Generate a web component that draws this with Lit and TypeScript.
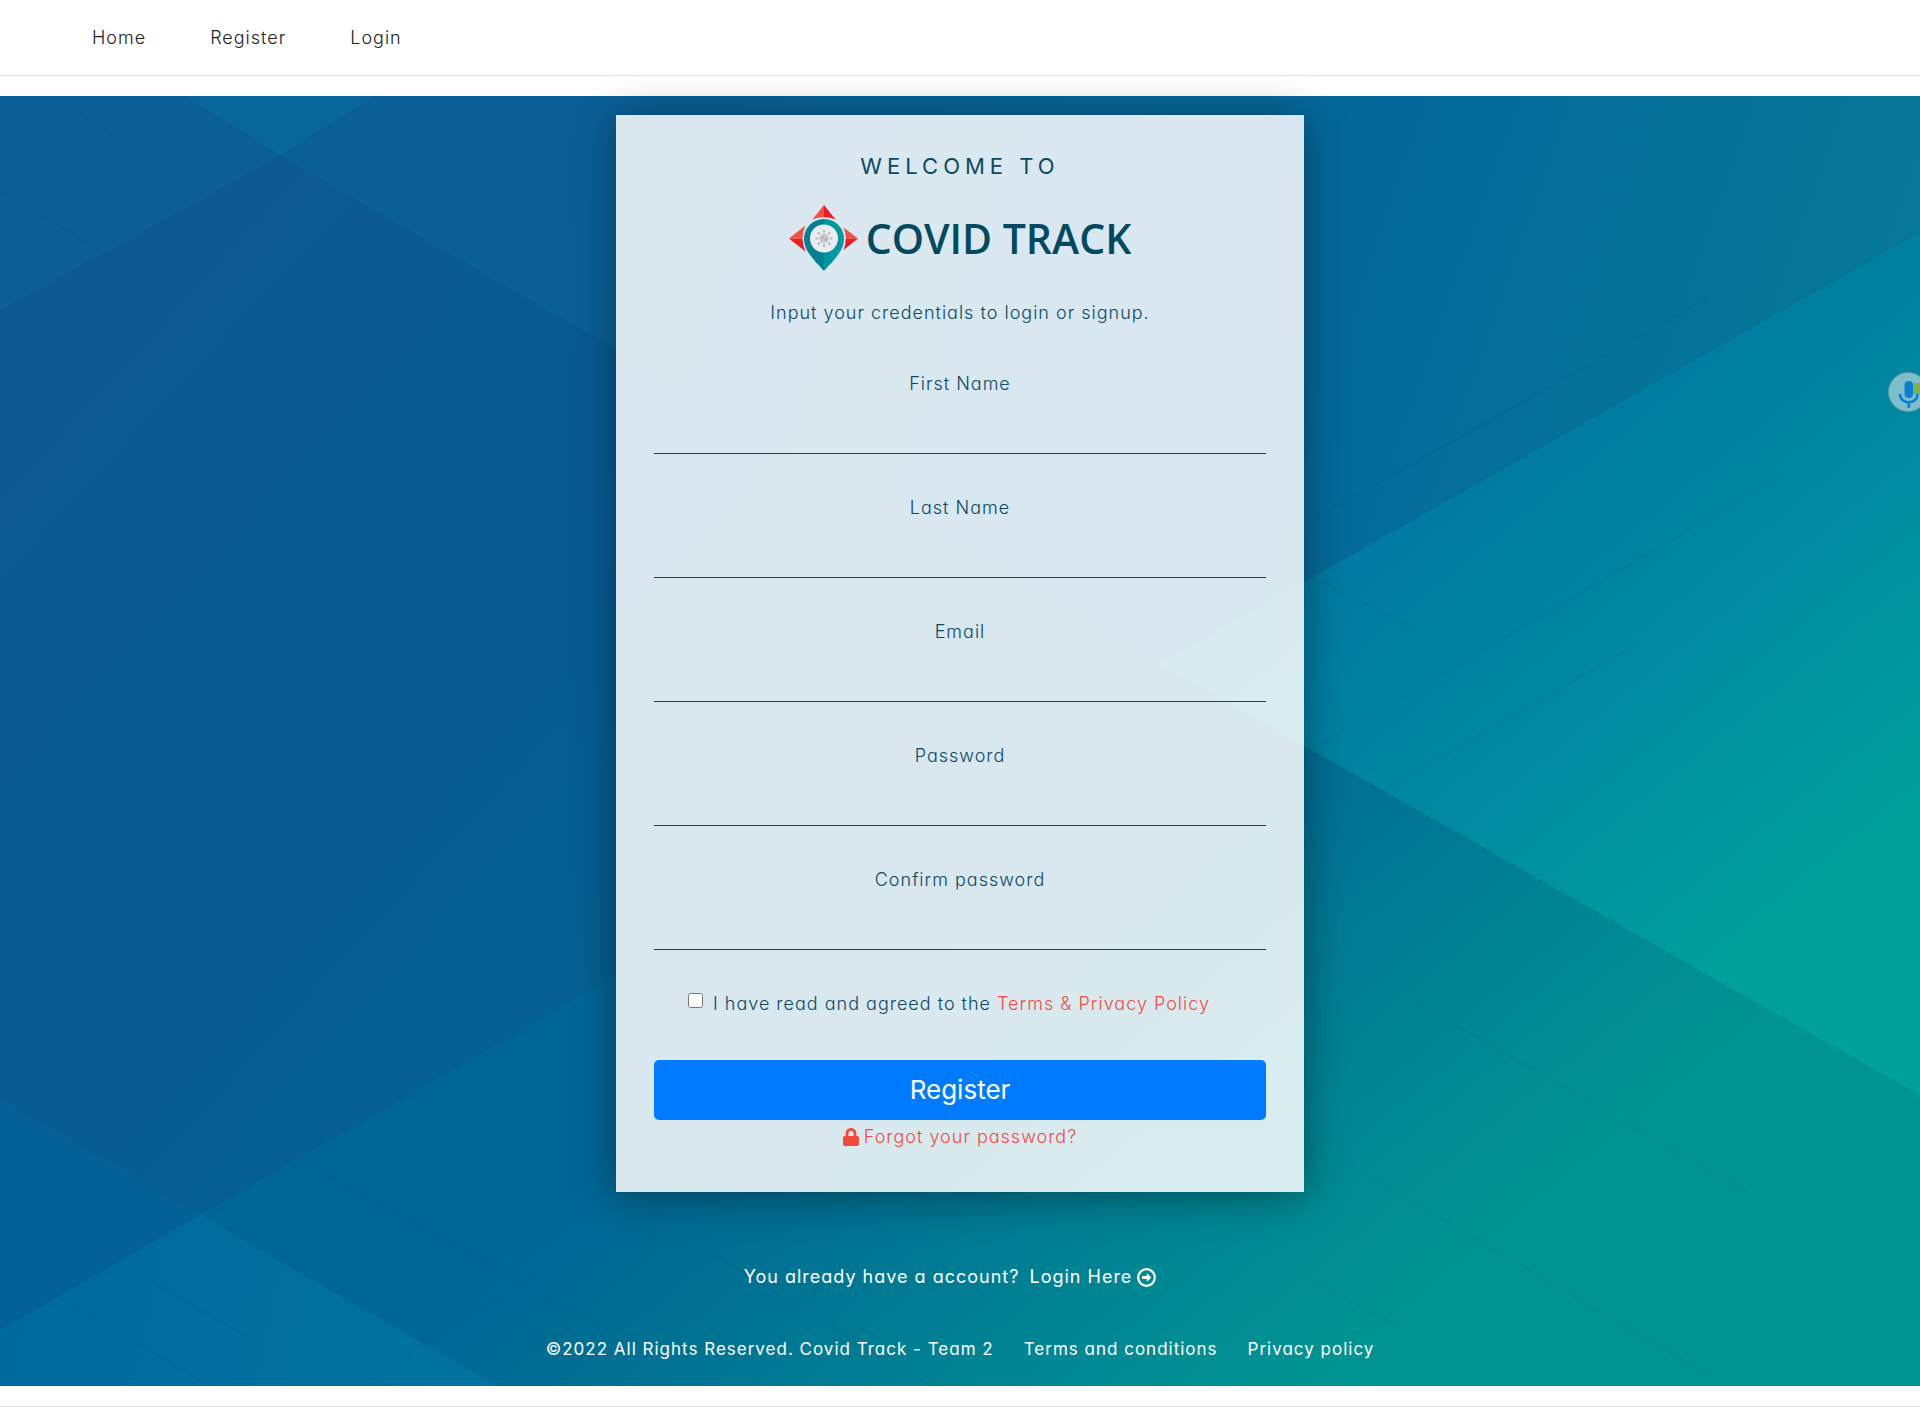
import { LitElement, html, css, svg } from "lit";
import { customElement } from "lit/decorators.js";

interface Field {
  id: string;
  label: string;
  type: string;
}

const FIELDS: Field[] = [
  { id: "first-name", label: "First Name", type: "text" },
  { id: "last-name", label: "Last Name", type: "text" },
  { id: "email", label: "Email", type: "email" },
  { id: "password", label: "Password", type: "password" },
  { id: "confirm-password", label: "Confirm password", type: "password" },
];

/** Faceted blue-to-teal artwork behind the form. */
@customElement("facet-backdrop")
export class FacetBackdrop extends LitElement {
  static styles = css`
    :host {
      display: block;
      overflow: hidden;
    }
    .art {
      display: block;
      width: 100%;
      height: 100%;
    }
  `;

  render() {
    return html`
      <svg class="art" viewBox="0 0 1920 1290" preserveAspectRatio="none" aria-hidden="true">
        <defs>
          <linearGradient id="top" gradientUnits="userSpaceOnUse" x1="600" y1="0" x2="1800" y2="420">
            <stop offset="0" stop-color="#0a5f96" />
            <stop offset="0.6" stop-color="#04699a" />
            <stop offset="1" stop-color="#067796" />
          </linearGradient>
          <linearGradient id="core" gradientUnits="userSpaceOnUse" x1="250" y1="60" x2="1050" y2="800">
            <stop offset="0" stop-color="#0e5891" />
            <stop offset="0.5" stop-color="#055b92" />
            <stop offset="1" stop-color="#04658f" />
          </linearGradient>
          <linearGradient id="right" gradientUnits="userSpaceOnUse" x1="1320" y1="474" x2="1673" y2="905">
            <stop offset="0" stop-color="#007aa1" />
            <stop offset="0.5" stop-color="#008aa1" />
            <stop offset="1" stop-color="#00a09b" />
          </linearGradient>
          <linearGradient id="bottom" gradientUnits="userSpaceOnUse" x1="600" y1="1068" x2="1010" y2="1568">
            <stop offset="0" stop-color="#006696" />
            <stop offset="0.3" stop-color="#007293" />
            <stop offset="0.5" stop-color="#007d94" />
            <stop offset="0.75" stop-color="#008b93" />
            <stop offset="1" stop-color="#009491" />
          </linearGradient>
          <linearGradient id="low" gradientUnits="userSpaceOnUse" x1="0" y1="1200" x2="450" y2="1290">
            <stop offset="0" stop-color="#006a9e" />
            <stop offset="1" stop-color="#00739e" />
          </linearGradient>
        </defs>
        <rect width="1920" height="1290" fill="#0b5f96" />
        <path d="M280 59 375 0H1920V136L1160 568Z" fill="url(#top)" />
        <path d="M185 0H375L280 59Z" fill="#08679b" />
        <path d="M280 59 1160 568 200 1119 0 1004V214Z" fill="url(#core)" />
        <path d="M1160 568 1920 136V1000Z" fill="url(#right)" />
        <path d="M1160 568 1920 1000V1290H497L200 1119Z" fill="url(#bottom)" />
        <path d="M0 1004 200 1119 0 1234Z" fill="#036197" />
        <path d="M0 1234 200 1119 497 1290H0Z" fill="url(#low)" />
        <g fill="none" stroke="#024f7c" stroke-opacity="0.11" stroke-width="2">
          <path d="M55 0 205 100M0 95 110 160M118 1166 255 1245M55 1200 210 1290" />
          <path d="M325 1078 600 1230M365 1285 540 1175M700 1150 930 1290" />
          <path d="M1314 423 1708 202M1320 485 1410 530M1322 648 1788 376M1386 693 1637 548" />
          <path d="M1290 1172 1410 1237M1330 1058 1712 1281M1414 905 1748 1097" />
        </g>
      </svg>
    `;
  }
}

@customElement("app-root")
export class AppRoot extends LitElement {
  static styles = css`
    :host {
      display: block;
      background: #fff;
      color: #0b4a63;
      font: 300 18px/28px Inter, "Liberation Sans", sans-serif;
      font-feature-settings: "cv11";
      letter-spacing: 1px;
    }
    *,
    *::before {
      box-sizing: border-box;
    }
    a {
      color: inherit;
      text-decoration: none;
    }
    .bar {
      display: flex;
      align-items: center;
      gap: 64px;
      height: 76px;
      padding: 0 92px;
      border-bottom: 1px solid #dee2e6;
      margin-bottom: 20px;
      color: #222;
    }
    .hero {
      position: relative;
      display: flex;
      flex-direction: column;
      align-items: center;
      padding: 19px 16px 23px;
      margin-bottom: 20px;
    }
    .backdrop {
      position: absolute;
      inset: 0;
    }
    .card,
    .switch,
    .legal {
      position: relative;
    }
    .card {
      width: 100%;
      max-width: 688px;
      padding: 38px;
      background: rgba(255, 255, 255, 0.85);
      box-shadow: 0 4px 40px rgba(0, 0, 0, 0.4);
      text-align: center;
    }
    .welcome {
      margin: 0 0 26px;
      font-size: 22px;
      line-height: 26px;
      font-weight: 400;
      letter-spacing: 5px;
      text-transform: uppercase;
    }
    .brand {
      display: flex;
      justify-content: center;
      align-items: center;
      gap: 8px;
      height: 66px;
      margin-bottom: 28px;
      color: #03495f;
      font: 600 41px/66px "Open Sans", sans-serif;
      letter-spacing: normal;
    }
    .brand-mark {
      width: 69px;
      height: 66px;
    }
    .hint {
      margin: 0 0 43px;
    }
    .field {
      display: flex;
      flex-direction: column;
      margin-bottom: 40px;
    }
    .field-input {
      height: 56px;
      padding: 12px;
      border: 0;
      border-bottom: 1px solid #0b4a63;
      border-radius: 0;
      background: transparent;
      color: inherit;
      font: inherit;
      outline: none;
      text-align: center;
    }
    .consent {
      display: flex;
      gap: 10px;
      padding-left: 34px;
      margin-bottom: 42px;
      text-align: left;
    }
    .tick {
      flex: none;
      width: 15px;
      height: 15px;
      margin: 3px 0 0;
    }
    .accent {
      color: #f44a3e;
    }
    .submit {
      display: block;
      width: 100%;
      height: 60px;
      border: 0;
      border-radius: 5px;
      background: #007bff;
      color: #fff;
      font: 400 26px/30px Inter, "Liberation Sans", sans-serif;
    }
    .forgot {
      display: flex;
      justify-content: center;
      align-items: center;
      gap: 5px;
      line-height: 34px;
    }
    .lock {
      width: 16px;
      height: 18px;
    }
    .switch {
      display: flex;
      gap: 10px;
      margin-top: 71px;
      padding-right: 20px;
      color: #fff;
      font-weight: 400;
    }
    .login {
      display: flex;
      align-items: center;
      gap: 5px;
    }
    .go {
      width: 19px;
      height: 19px;
    }
    .legal {
      display: flex;
      flex-wrap: wrap;
      justify-content: center;
      gap: 0 30px;
      margin-top: 44px;
      color: #fff;
      font-size: 17px;
      font-weight: 400;
    }
    .mic {
      position: absolute;
      top: 371px;
      right: 0;
      width: 32px;
      height: 42px;
      padding: 0;
      border: 0;
      background: none;
      overflow: hidden;
    }
    .mic-art {
      display: block;
      width: 32px;
      height: 42px;
    }
    .foot {
      border-top: 1px solid #dee2e6;
    }
  `;

  private renderSpikes() {
    return [0, 45, 90, 135, 180, 225, 270, 315].map(
      (angle) => svg`
        <g transform="rotate(${angle} 35 33.5)">
          <path d="M35 30V27" stroke="#b9b9bf" stroke-width="0.8" />
          <circle cx="35" cy="26" r="1.1" fill="#a9aab2" />
        </g>`
    );
  }

  private renderMark() {
    return html`
      <svg class="brand-mark" viewBox="0 0 69 66" aria-hidden="true">
        <path d="M35 0 23.5 14.5Q29 12 35 12Z" fill="#f0503f" />
        <path d="M35 0 46.500 14.500Q41 12 35 12Z" fill="#ed1c24" />
        <path d="M0 33.500 16.500 20.500Q13.500 27 13.500 33.500Z" fill="#f0503f" />
        <path d="M0 33.500 16.500 46.500Q13.500 40 13.500 33.500Z" fill="#ed1c24" />
        <path d="M69 33.500 54.500 22.500Q57 28 56.800 33.500Z" fill="#f0503f" />
        <path d="M69 33.500 54.500 45Q57 39 56.800 33.500Z" fill="#ed1c24" />
        <path d="M35 14A20 20 0 0 0 15 34C15 46 26 56 35 66Z" fill="#068091" />
        <path d="M35 14A20 20 0 0 1 55 34C55 46 44 56 35 66Z" fill="#00979f" />
        <circle cx="35" cy="33.5" r="14" fill="#e9edf1" />
        ${this.renderSpikes()}
        <circle cx="35" cy="33.5" r="4.6" fill="#c9c8cb" />
        <circle cx="33.600" cy="32.500" r="1" fill="#b0a9a9" />
        <circle cx="36.500" cy="34.500" r="1.200" fill="#b7b0b0" />
      </svg>
    `;
  }

  render() {
    return html`
      <nav class="bar">
        <a href="#home">Home</a>
        <a href="#register">Register</a>
        <a href="#login">Login</a>
      </nav>
      <main class="hero">
        <facet-backdrop class="backdrop"></facet-backdrop>
        <form class="card">
          <h1 class="welcome">Welcome to</h1>
          <div class="brand">${this.renderMark()}<span>COVID TRACK</span></div>
          <p class="hint">Input your credentials to login or signup.</p>
          ${FIELDS.map(
            (f) => html`
              <div class="field">
                <label for=${f.id}>${f.label}</label>
                <input class="field-input" id=${f.id} name=${f.id} type=${f.type} />
              </div>
            `
          )}
          <div class="consent">
            <input class="tick" id="agree" type="checkbox" />
            <span>
              <label for="agree">I have read and agreed to the</label>
              <a class="accent" href="#terms">Terms &amp; Privacy Policy</a>
            </span>
          </div>
          <button class="submit" type="button">Register</button>
          <a class="forgot accent" href="#forgot">
            <svg class="lock" viewBox="0 0 448 512" preserveAspectRatio="none" aria-hidden="true">
              <path
                fill="currentColor"
                d="M400 224h-24v-72C376 68.200 307.800 0 224 0S72 68.200 72 152v72H48c-26.500 0-48 21.500-48 48v192c0 26.500 21.500 48 48 48h352c26.500 0 48-21.500 48-48V272c0-26.500-21.500-48-48-48zm-104 0H152v-72c0-39.700 32.300-72 72-72s72 32.300 72 72v72z"
              />
            </svg>
            Forgot your password?
          </a>
        </form>
        <div class="switch">
          <span>You already have a account?</span>
          <a class="login" href="#login">
            Login Here
            <svg class="go" viewBox="0 0 19 19" fill="none" stroke="currentColor" aria-hidden="true">
              <circle cx="9.5" cy="9.5" r="8.3" stroke-width="2.2" />
              <path d="M5 9.500H11" stroke-width="3" />
              <path d="M9.800 5 14.300 9.500 9.800 14Z" fill="currentColor" stroke="none" />
            </svg>
          </a>
        </div>
        <footer class="legal">
          <span>©2022 All Rights Reserved. Covid Track - Team 2</span>
          <a href="#terms">Terms and conditions</a>
          <a href="#privacy">Privacy policy</a>
        </footer>
      </main>
      <button class="mic" type="button" aria-label="Voice input">
        <svg class="mic-art" viewBox="0 0 32 42" aria-hidden="true">
          <circle cx="20" cy="21" r="19.500" fill="#7fbfcc" stroke="#5a9aa8" />
          <rect x="25" y="12" width="7" height="11" fill="#7fb04e" />
          <rect x="16.500" y="10" width="8.500" height="17" rx="4" fill="#0a7fd8" />
          <path d="M12 23C12 34 29.500 34 29.500 23M20.800 31V37" fill="none" stroke="#0a7fd8" stroke-width="2.600" />
        </svg>
      </button>
      <div class="foot"></div>
    `;
  }
}
